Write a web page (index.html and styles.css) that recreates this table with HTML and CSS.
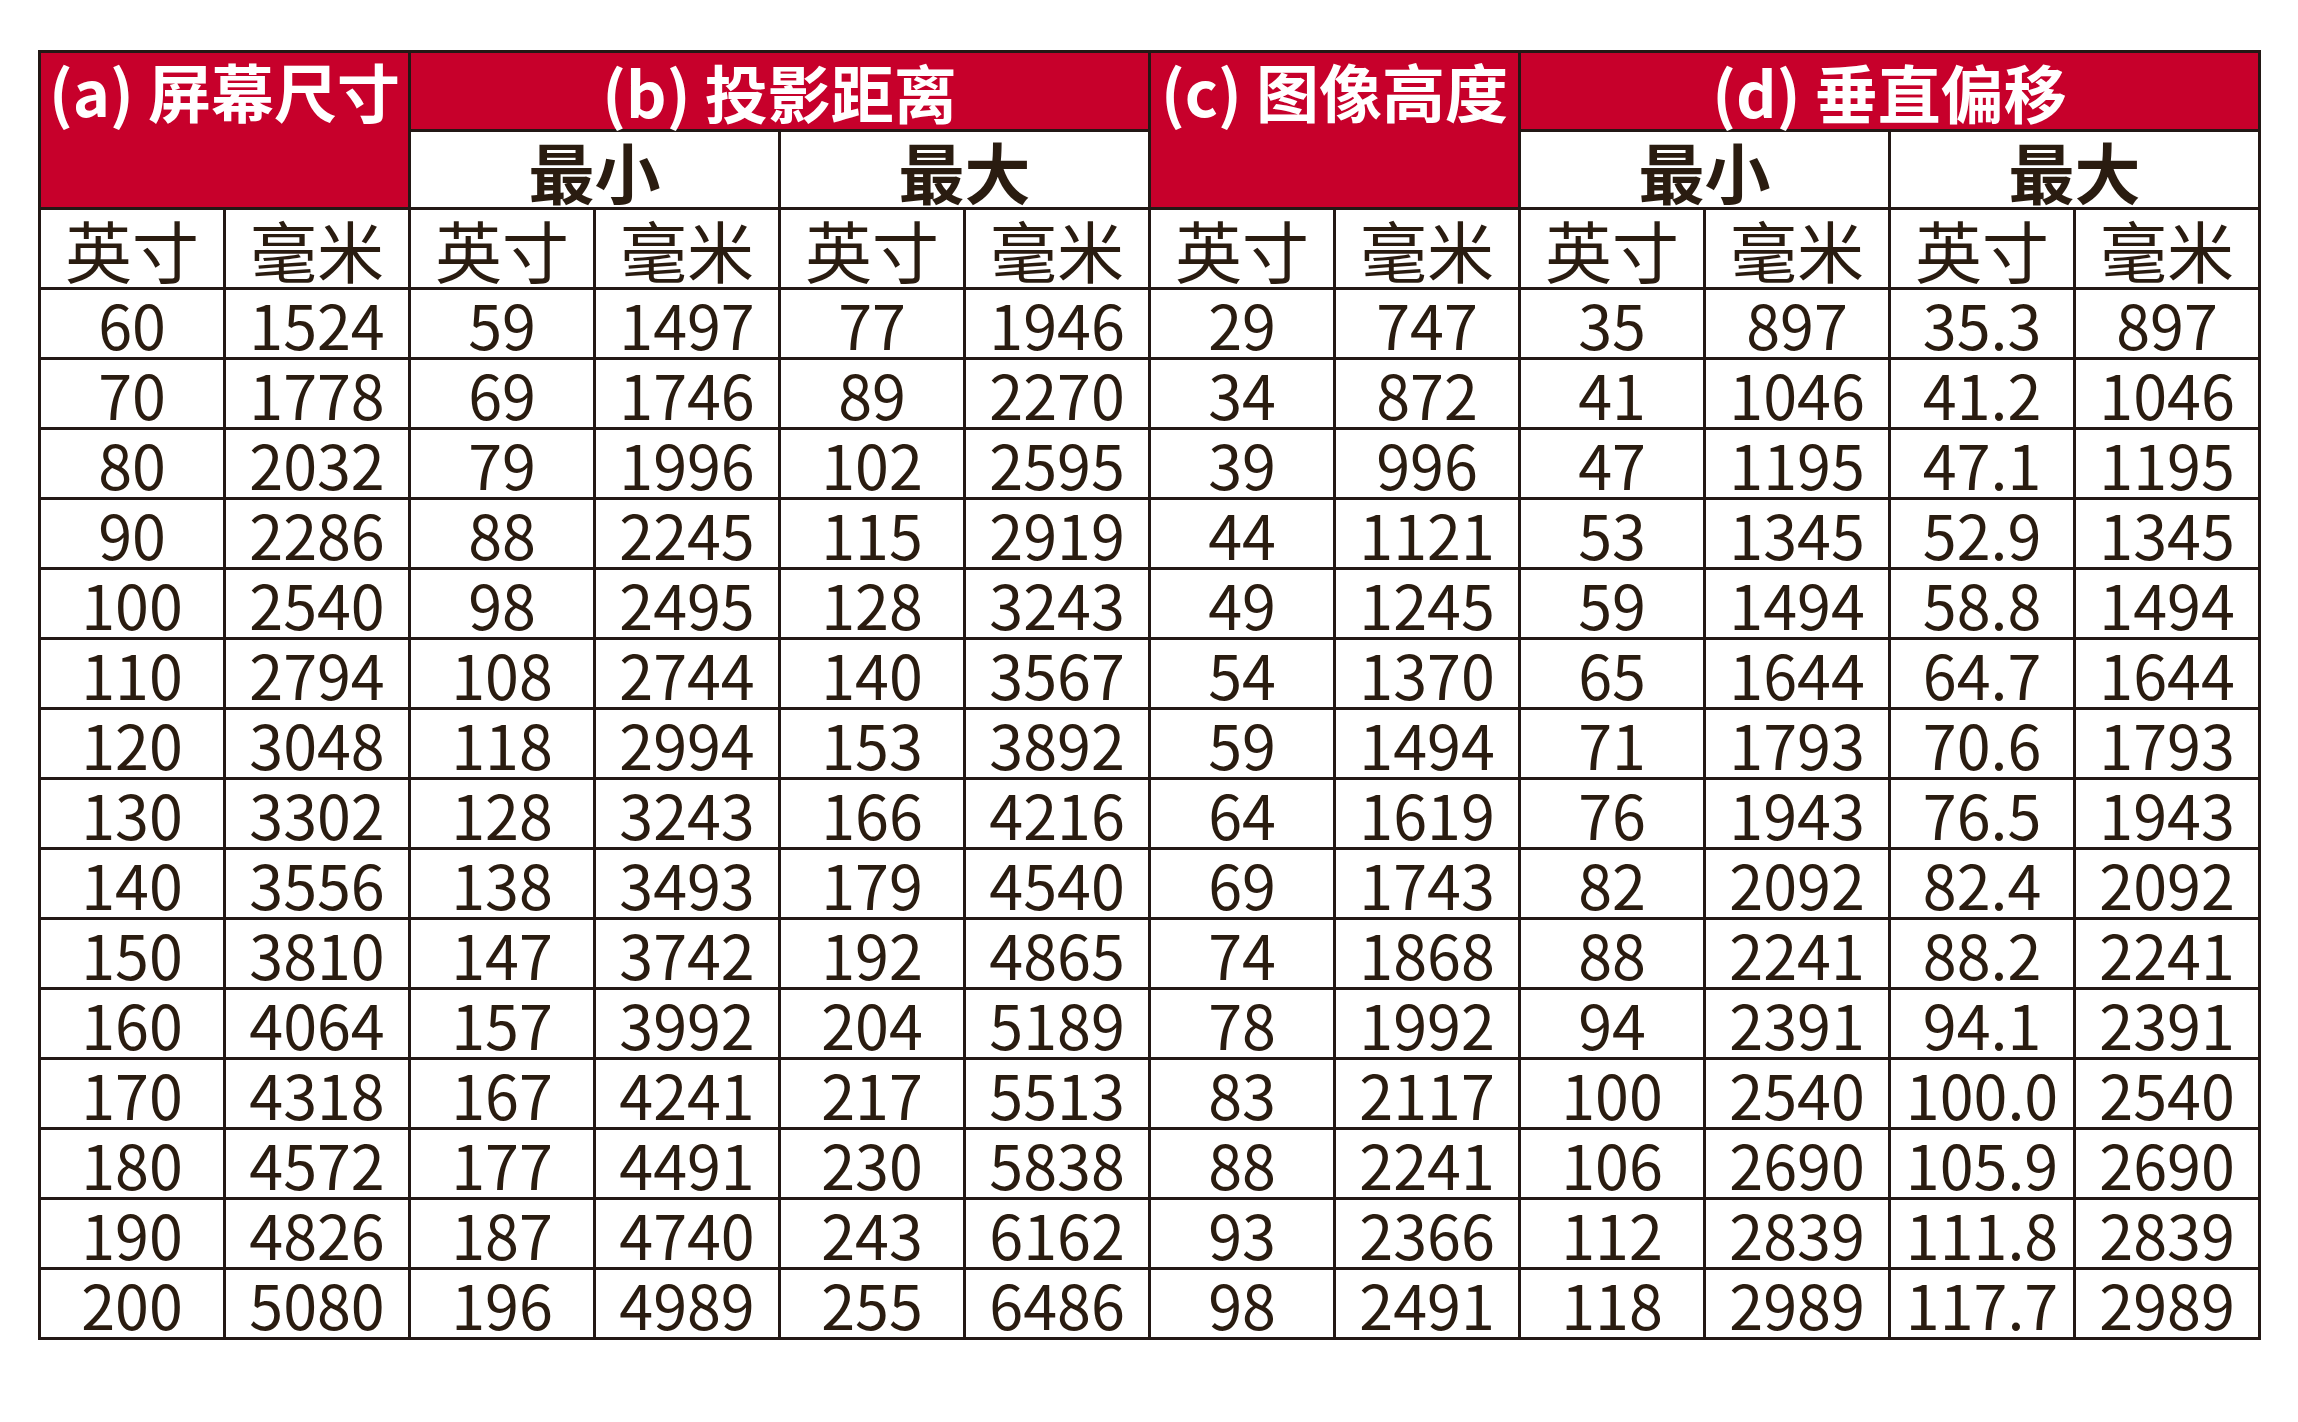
FILE: index.html
```html
<!DOCTYPE html>
<html lang="zh-CN">
<head>
<meta charset="utf-8">
<title>投影尺寸表</title>
<link rel="stylesheet" href="styles.css">
</head>
<body>
<table class="spec">
  <colgroup>
    <col class="c"><col class="c"><col class="c"><col class="c"><col class="c"><col class="c">
    <col class="c"><col class="c"><col class="c"><col class="c"><col class="c"><col class="c">
  </colgroup>
  <thead>
    <tr class="r1">
      <th class="main top" colspan="2" rowspan="2">(a) 屏幕尺寸</th>
      <th class="main" colspan="4">(b) 投影距离</th>
      <th class="main top" colspan="2" rowspan="2">(c) 图像高度</th>
      <th class="main" colspan="4">(d) 垂直偏移</th>
    </tr>
    <tr class="r2">
      <th class="sub" colspan="2">最小</th>
      <th class="sub" colspan="2">最大</th>
      <th class="sub" colspan="2">最小</th>
      <th class="sub" colspan="2">最大</th>
    </tr>
    <tr class="r3">
      <th class="unit">英寸</th><th class="unit">毫米</th>
      <th class="unit">英寸</th><th class="unit">毫米</th>
      <th class="unit">英寸</th><th class="unit">毫米</th>
      <th class="unit">英寸</th><th class="unit">毫米</th>
      <th class="unit">英寸</th><th class="unit">毫米</th>
      <th class="unit">英寸</th><th class="unit">毫米</th>
    </tr>
  </thead>
  <tbody>
    <tr><td>60</td><td>1524</td><td>59</td><td>1497</td><td>77</td><td>1946</td><td>29</td><td>747</td><td>35</td><td>897</td><td>35.3</td><td>897</td></tr>
    <tr><td>70</td><td>1778</td><td>69</td><td>1746</td><td>89</td><td>2270</td><td>34</td><td>872</td><td>41</td><td>1046</td><td>41.2</td><td>1046</td></tr>
    <tr><td>80</td><td>2032</td><td>79</td><td>1996</td><td>102</td><td>2595</td><td>39</td><td>996</td><td>47</td><td>1195</td><td>47.1</td><td>1195</td></tr>
    <tr><td>90</td><td>2286</td><td>88</td><td>2245</td><td>115</td><td>2919</td><td>44</td><td>1121</td><td>53</td><td>1345</td><td>52.9</td><td>1345</td></tr>
    <tr><td>100</td><td>2540</td><td>98</td><td>2495</td><td>128</td><td>3243</td><td>49</td><td>1245</td><td>59</td><td>1494</td><td>58.8</td><td>1494</td></tr>
    <tr><td>110</td><td>2794</td><td>108</td><td>2744</td><td>140</td><td>3567</td><td>54</td><td>1370</td><td>65</td><td>1644</td><td>64.7</td><td>1644</td></tr>
    <tr><td>120</td><td>3048</td><td>118</td><td>2994</td><td>153</td><td>3892</td><td>59</td><td>1494</td><td>71</td><td>1793</td><td>70.6</td><td>1793</td></tr>
    <tr><td>130</td><td>3302</td><td>128</td><td>3243</td><td>166</td><td>4216</td><td>64</td><td>1619</td><td>76</td><td>1943</td><td>76.5</td><td>1943</td></tr>
    <tr><td>140</td><td>3556</td><td>138</td><td>3493</td><td>179</td><td>4540</td><td>69</td><td>1743</td><td>82</td><td>2092</td><td>82.4</td><td>2092</td></tr>
    <tr><td>150</td><td>3810</td><td>147</td><td>3742</td><td>192</td><td>4865</td><td>74</td><td>1868</td><td>88</td><td>2241</td><td>88.2</td><td>2241</td></tr>
    <tr><td>160</td><td>4064</td><td>157</td><td>3992</td><td>204</td><td>5189</td><td>78</td><td>1992</td><td>94</td><td>2391</td><td>94.1</td><td>2391</td></tr>
    <tr><td>170</td><td>4318</td><td>167</td><td>4241</td><td>217</td><td>5513</td><td>83</td><td>2117</td><td>100</td><td>2540</td><td>100.0</td><td>2540</td></tr>
    <tr><td>180</td><td>4572</td><td>177</td><td>4491</td><td>230</td><td>5838</td><td>88</td><td>2241</td><td>106</td><td>2690</td><td>105.9</td><td>2690</td></tr>
    <tr><td>190</td><td>4826</td><td>187</td><td>4740</td><td>243</td><td>6162</td><td>93</td><td>2366</td><td>112</td><td>2839</td><td>111.8</td><td>2839</td></tr>
    <tr><td>200</td><td>5080</td><td>196</td><td>4989</td><td>255</td><td>6486</td><td>98</td><td>2491</td><td>118</td><td>2989</td><td>117.7</td><td>2989</td></tr>
  </tbody>
</table>
</body>
</html>
```
FILE: styles.css
```css
html, body {
  margin: 0;
  padding: 0;
  background: #ffffff;
}

body {
  padding: 50px 0 0 38px;
  font-family: "Noto Sans CJK SC", "Noto Sans", sans-serif;
  color: #2a1c10;
}

.spec {
  border-collapse: collapse;
  table-layout: fixed;
  width: 2221px;
  border: 3px solid #231815;
}

.spec col.c {
  width: 185px;
}

.spec th,
.spec td {
  border: 3px solid #231815;
  padding: 0;
  text-align: center;
  white-space: nowrap;
}

.spec .r1 { height: 79px; }
.spec .r2 { height: 78px; }
.spec .r3 { height: 80px; }
.spec tbody tr { height: 70px; }

.main {
  background: #c7002b;
  color: #ffffff;
  font-size: 63px;
  font-weight: 700;
  line-height: 74px;
}

.main.top {
  vertical-align: top;
}

.sub {
  background: #ffffff;
  color: #2a1c10;
  font-size: 66px;
  font-weight: 700;
  line-height: 74px;
}

.unit {
  font-size: 67px;
  font-weight: 400;
  line-height: 76px;
  vertical-align: middle;
}

.spec td {
  font-size: 61px;
  font-weight: 400;
  line-height: 66px;
  vertical-align: middle;
}
```
